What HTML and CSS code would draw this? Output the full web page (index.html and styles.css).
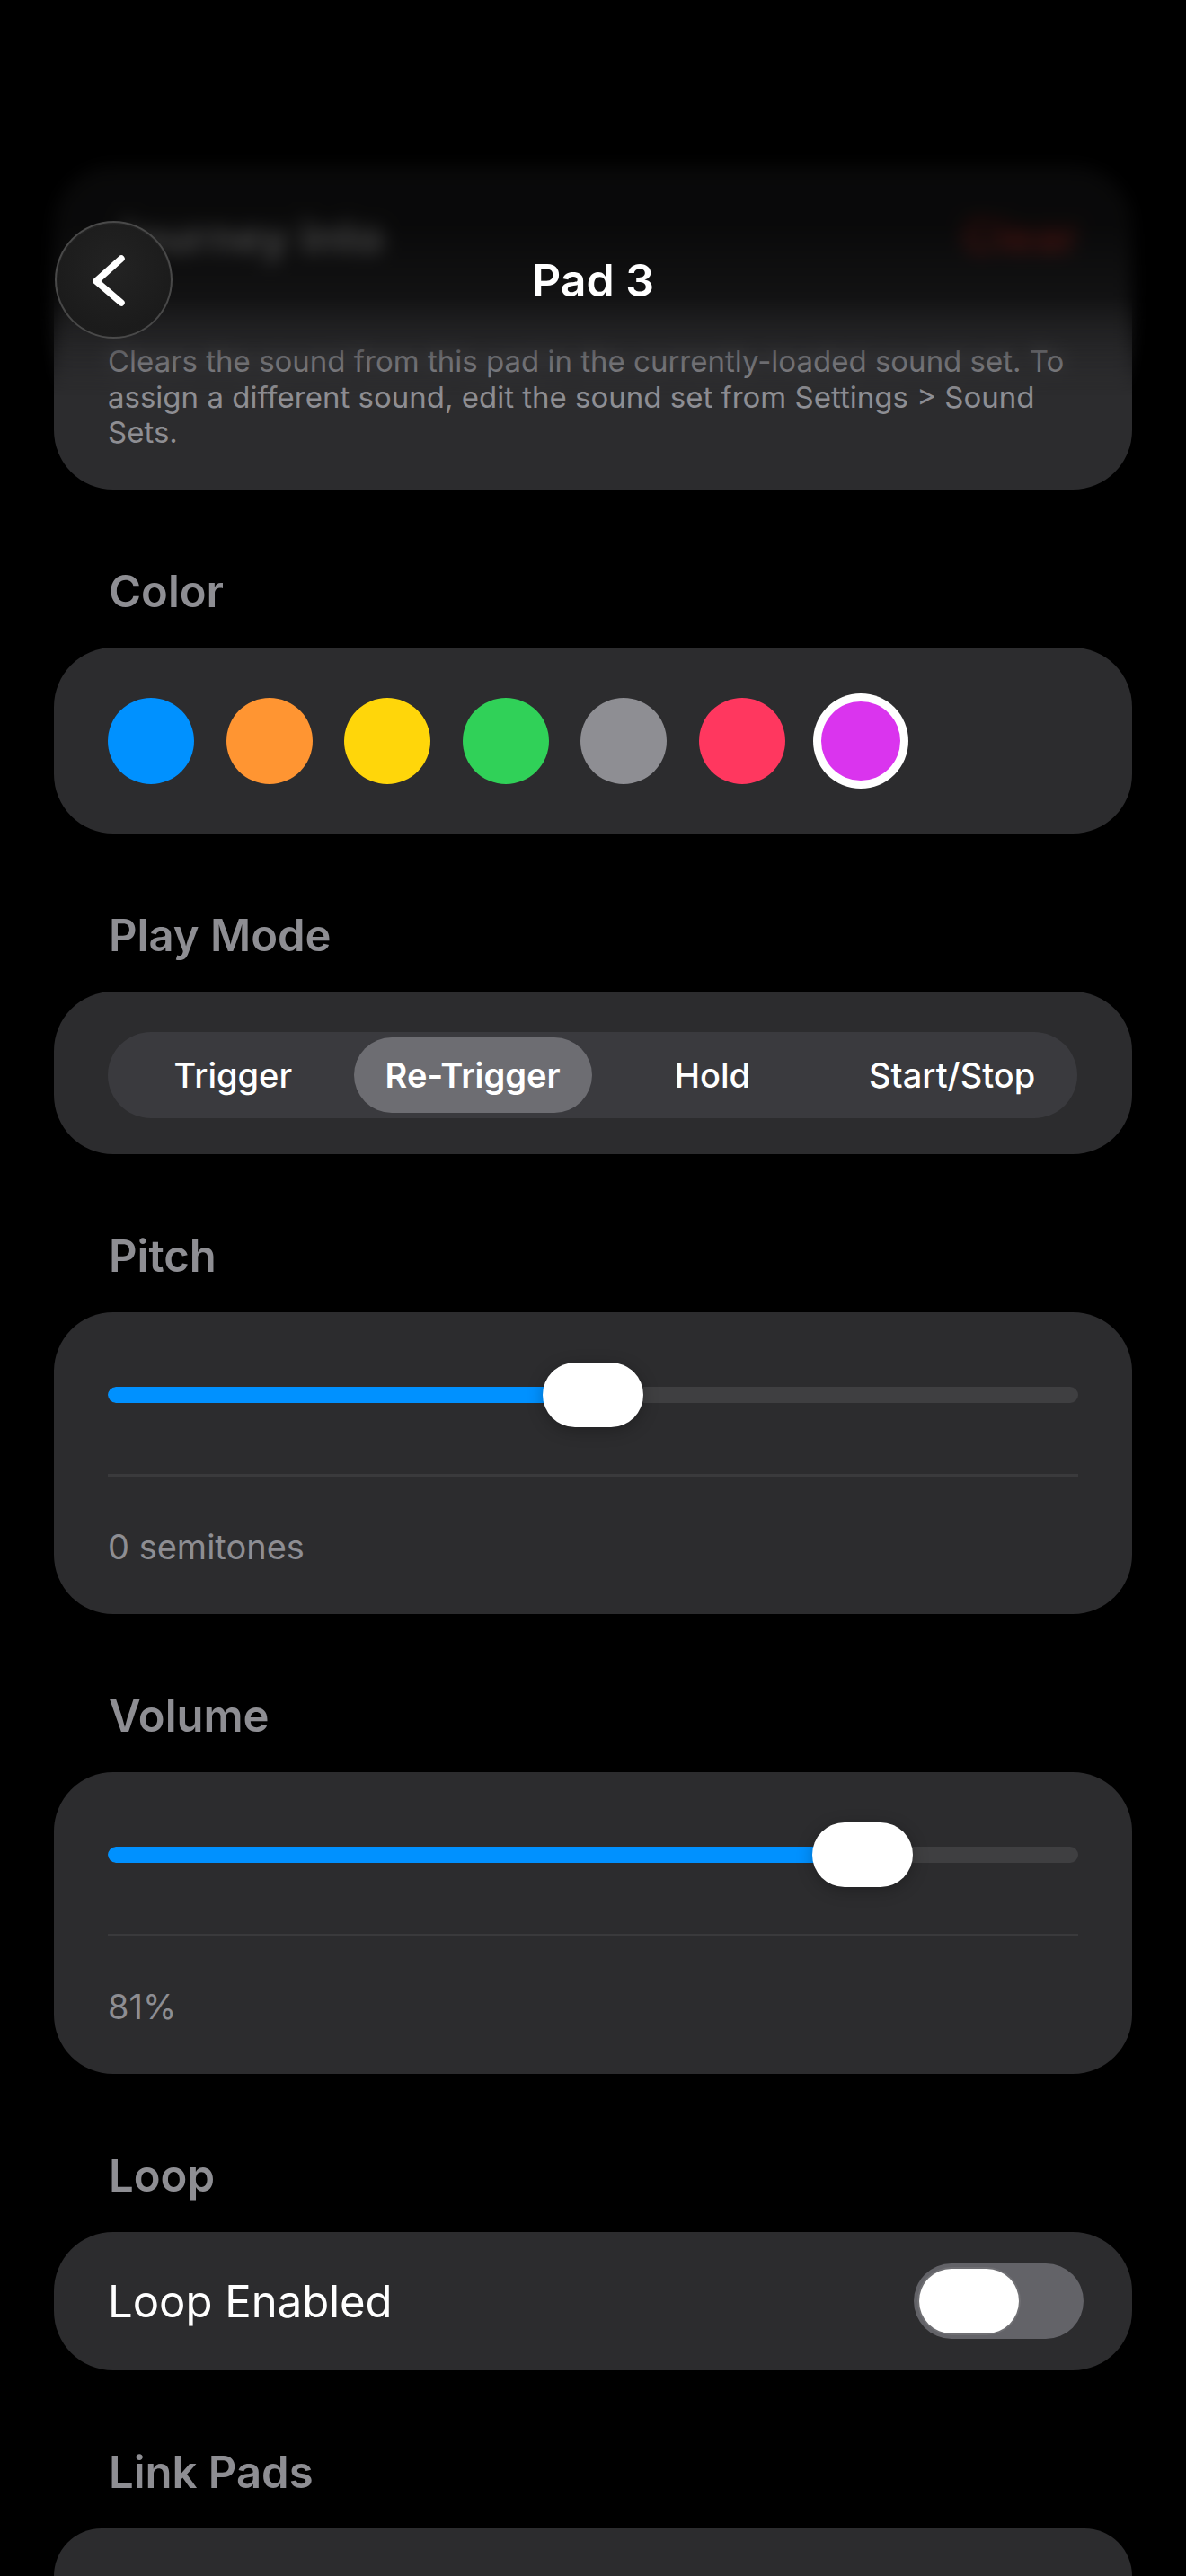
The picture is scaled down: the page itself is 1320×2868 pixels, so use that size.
FILE: index.html
```html
<!DOCTYPE html>
<html lang="en">
<head>
<meta charset="utf-8">
<title>Pad 3</title>
<link rel="stylesheet" href="styles.css">
</head>
<body>
<main class="page">
  <section class="card info-card">
    <div class="info-head">
      <span class="info-title">Journey Into</span>
      <span class="info-action">Clear</span>
    </div>
    <p class="info-desc">Clears the sound from this pad in the currently-loaded sound set. To<br>assign a different sound, edit the sound set from Settings &gt; Sound<br>Sets.</p>
  </section>

  <h2 class="section-title">Color</h2>
  <section class="card color-card">
    <span class="swatch" style="--c:#0091ff"></span>
    <span class="swatch" style="--c:#ff9532"></span>
    <span class="swatch" style="--c:#ffd60a"></span>
    <span class="swatch" style="--c:#30d158"></span>
    <span class="swatch" style="--c:#8e8e93"></span>
    <span class="swatch" style="--c:#ff375f"></span>
    <span class="swatch selected" style="--c:#da34ee"></span>
  </section>

  <h2 class="section-title">Play Mode</h2>
  <section class="card mode-card">
    <div class="segmented">
      <span class="segment">Trigger</span>
      <span class="segment active">Re-Trigger</span>
      <span class="segment">Hold</span>
      <span class="segment">Start/Stop</span>
    </div>
  </section>

  <h2 class="section-title">Pitch</h2>
  <section class="card slider-card">
    <div class="slider" style="--p:0.5">
      <div class="slider-track"><div class="slider-fill"></div></div>
      <div class="slider-thumb"></div>
    </div>
    <div class="divider"></div>
    <div class="slider-value">0 semitones</div>
  </section>

  <h2 class="section-title">Volume</h2>
  <section class="card slider-card">
    <div class="slider" style="--p:0.81">
      <div class="slider-track"><div class="slider-fill"></div></div>
      <div class="slider-thumb"></div>
    </div>
    <div class="divider"></div>
    <div class="slider-value">81%</div>
  </section>

  <h2 class="section-title">Loop</h2>
  <section class="card toggle-card">
    <span class="toggle-label">Loop Enabled</span>
    <span class="toggle"><span class="toggle-knob"></span></span>
  </section>

  <h2 class="section-title">Link Pads</h2>
  <section class="card link-card"></section>
</main>

<div class="scroll-edge"></div>
<header class="navbar">
  <button class="back-btn" aria-label="Back">
    <svg viewBox="0 0 131 131" width="131" height="131" aria-hidden="true">
      <path d="M74 42 L46 67 L74 91" fill="none" stroke="#ffffff" stroke-width="7.5" stroke-linecap="round" stroke-linejoin="round"/>
    </svg>
  </button>
  <h1 class="nav-title">Pad 3</h1>
  <span class="nav-spacer"></span>
</header>
</body>
</html>
```

FILE: styles.css
```css
* { box-sizing: border-box; }

html, body {
  margin: 0;
  padding: 0;
  background: #000;
}

body {
  font-family: Inter, "Noto Sans", "Liberation Sans", sans-serif;
  color: #fff;
  -webkit-font-smoothing: antialiased;
}

.page {
  padding: 185px 60px 0;
}

.card {
  background: #2c2c2e;
  border-radius: 66px;
}

/* top info card */
.info-card {
  height: 360px;
  padding: 50px 60px 0;
}

.info-head {
  display: flex;
  justify-content: space-between;
  align-items: center;
  height: 54px;
}

.info-title {
  font-size: 50px;
  font-weight: 700;
  color: #ffffff;
}

.info-action {
  font-size: 50px;
  font-weight: 600;
  color: #ff453a;
}

.info-desc {
  margin: 94px 0 0;
  font-size: 33px;
  line-height: 39.5px;
  color: #8e8e93;
  white-space: nowrap;
}

/* section titles */
.section-title {
  margin: 83px 0 31px;
  padding-left: 61px;
  font-size: 49px;
  line-height: 62px;
  font-weight: 600;
  color: #8e8e93;
}

/* color swatches */
.color-card {
  display: flex;
  gap: 35.6px;
  padding: 56px 60px 55px;
}

.swatch {
  width: 96px;
  height: 96px;
  border-radius: 50%;
  background: var(--c);
  flex: none;
}

.swatch.selected {
  width: 88px;
  height: 88px;
  margin: 4px;
  box-shadow: 0 0 0 9px #ffffff;
}

/* segmented control */
.mode-card {
  padding: 45px 61px 40px 60px;
}

.segmented {
  display: grid;
  grid-template-columns: repeat(4, 1fr);
  padding: 6px;
  height: 96px;
  border-radius: 48px;
  background: #3a3a3e;
}

.segment {
  display: flex;
  align-items: center;
  justify-content: center;
  margin: 0 1px;
  border-radius: 42px;
  font-size: 38px;
  font-weight: 500;
  color: #ffffff;
}

.segment.active {
  background: #6d6d72;
  font-weight: 600;
}

/* sliders */
.slider-card {
  display: flex;
  flex-direction: column;
  padding: 56px 60px 0;
}

.slider {
  position: relative;
  height: 72px;
  margin-bottom: 52px;
}

.slider-track {
  position: absolute;
  left: 0;
  right: 0;
  top: 27px;
  height: 18px;
  border-radius: 9px;
  background: #3f3f41;
  overflow: hidden;
}

.slider-fill {
  height: 100%;
  width: calc(var(--p) * (100% - 112px) + 56px);
  background: #0091ff;
  border-radius: 9px 0 0 9px;
}

.slider-thumb {
  position: absolute;
  top: 0;
  left: calc(var(--p) * (100% - 112px));
  width: 112px;
  height: 72px;
  border-radius: 36px;
  background: #ffffff;
  box-shadow: 0 4px 18px rgba(0, 0, 0, 0.25);
}

.divider {
  height: 3px;
  background: #3a3a3c;
}

.slider-value {
  padding: 55px 0 52px;
  font-size: 38px;
  line-height: 46px;
  color: #8e8e93;
}

/* loop toggle */
.toggle-card {
  display: flex;
  align-items: center;
  justify-content: space-between;
  padding: 35px 54px 35px 60px;
}

.toggle-label {
  font-size: 49px;
  font-weight: 400;
  color: #ffffff;
}

.toggle {
  display: flex;
  align-items: center;
  width: 189px;
  height: 84px;
  padding: 0 6px;
  border-radius: 42px;
  background: #636368;
}

.toggle-knob {
  width: 111px;
  height: 72px;
  border-radius: 36px;
  background: #ffffff;
  box-shadow: 0 0 0 2px rgba(255, 255, 255, 0.08);
}

.link-card {
  height: 53px;
  border-radius: 66px 66px 0 0;
}

/* top scroll-edge blur + dim */
.scroll-edge {
  position: absolute;
  top: 0;
  left: 0;
  right: 0;
  height: 480px;
  pointer-events: none;
  -webkit-backdrop-filter: blur(10px);
  backdrop-filter: blur(10px);
  -webkit-mask-image: linear-gradient(to bottom, #000 0, #000 330px, rgba(0,0,0,0.35) 400px, transparent 440px);
  mask-image: linear-gradient(to bottom, #000 0, #000 330px, rgba(0,0,0,0.35) 400px, transparent 440px);
}

.scroll-edge::after {
  content: "";
  position: absolute;
  inset: 0;
  background: linear-gradient(to bottom,
    rgba(0,0,0,0.8) 0,
    rgba(0,0,0,0.78) 250px,
    rgba(0,0,0,0.58) 330px,
    rgba(0,0,0,0.36) 370px,
    rgba(0,0,0,0.2) 405px,
    rgba(0,0,0,0.05) 440px,
    rgba(0,0,0,0) 470px);
}

.navbar {
  position: absolute;
  top: 246px;
  left: 0;
  right: 0;
  height: 131px;
  display: grid;
  grid-template-columns: 1fr auto 1fr;
  align-items: center;
}

.back-btn {
  width: 131px;
  height: 131px;
  margin-left: 61px;
  padding: 0;
  border-radius: 50%;
  border: 2px solid rgba(255, 255, 255, 0.2);
  background: radial-gradient(circle at 50% 40%, #232323 0, #1b1b1b 70%, #1f1f1f 100%);
  box-shadow: inset 0 1px 2px rgba(255,255,255,0.06);
  display: flex;
  align-items: center;
  justify-content: center;
}

.back-btn svg {
  display: block;
  margin: -2px;
}

.nav-title {
  margin: 0;
  font-size: 50px;
  font-weight: 600;
  color: #ffffff;
  text-align: center;
}
```
